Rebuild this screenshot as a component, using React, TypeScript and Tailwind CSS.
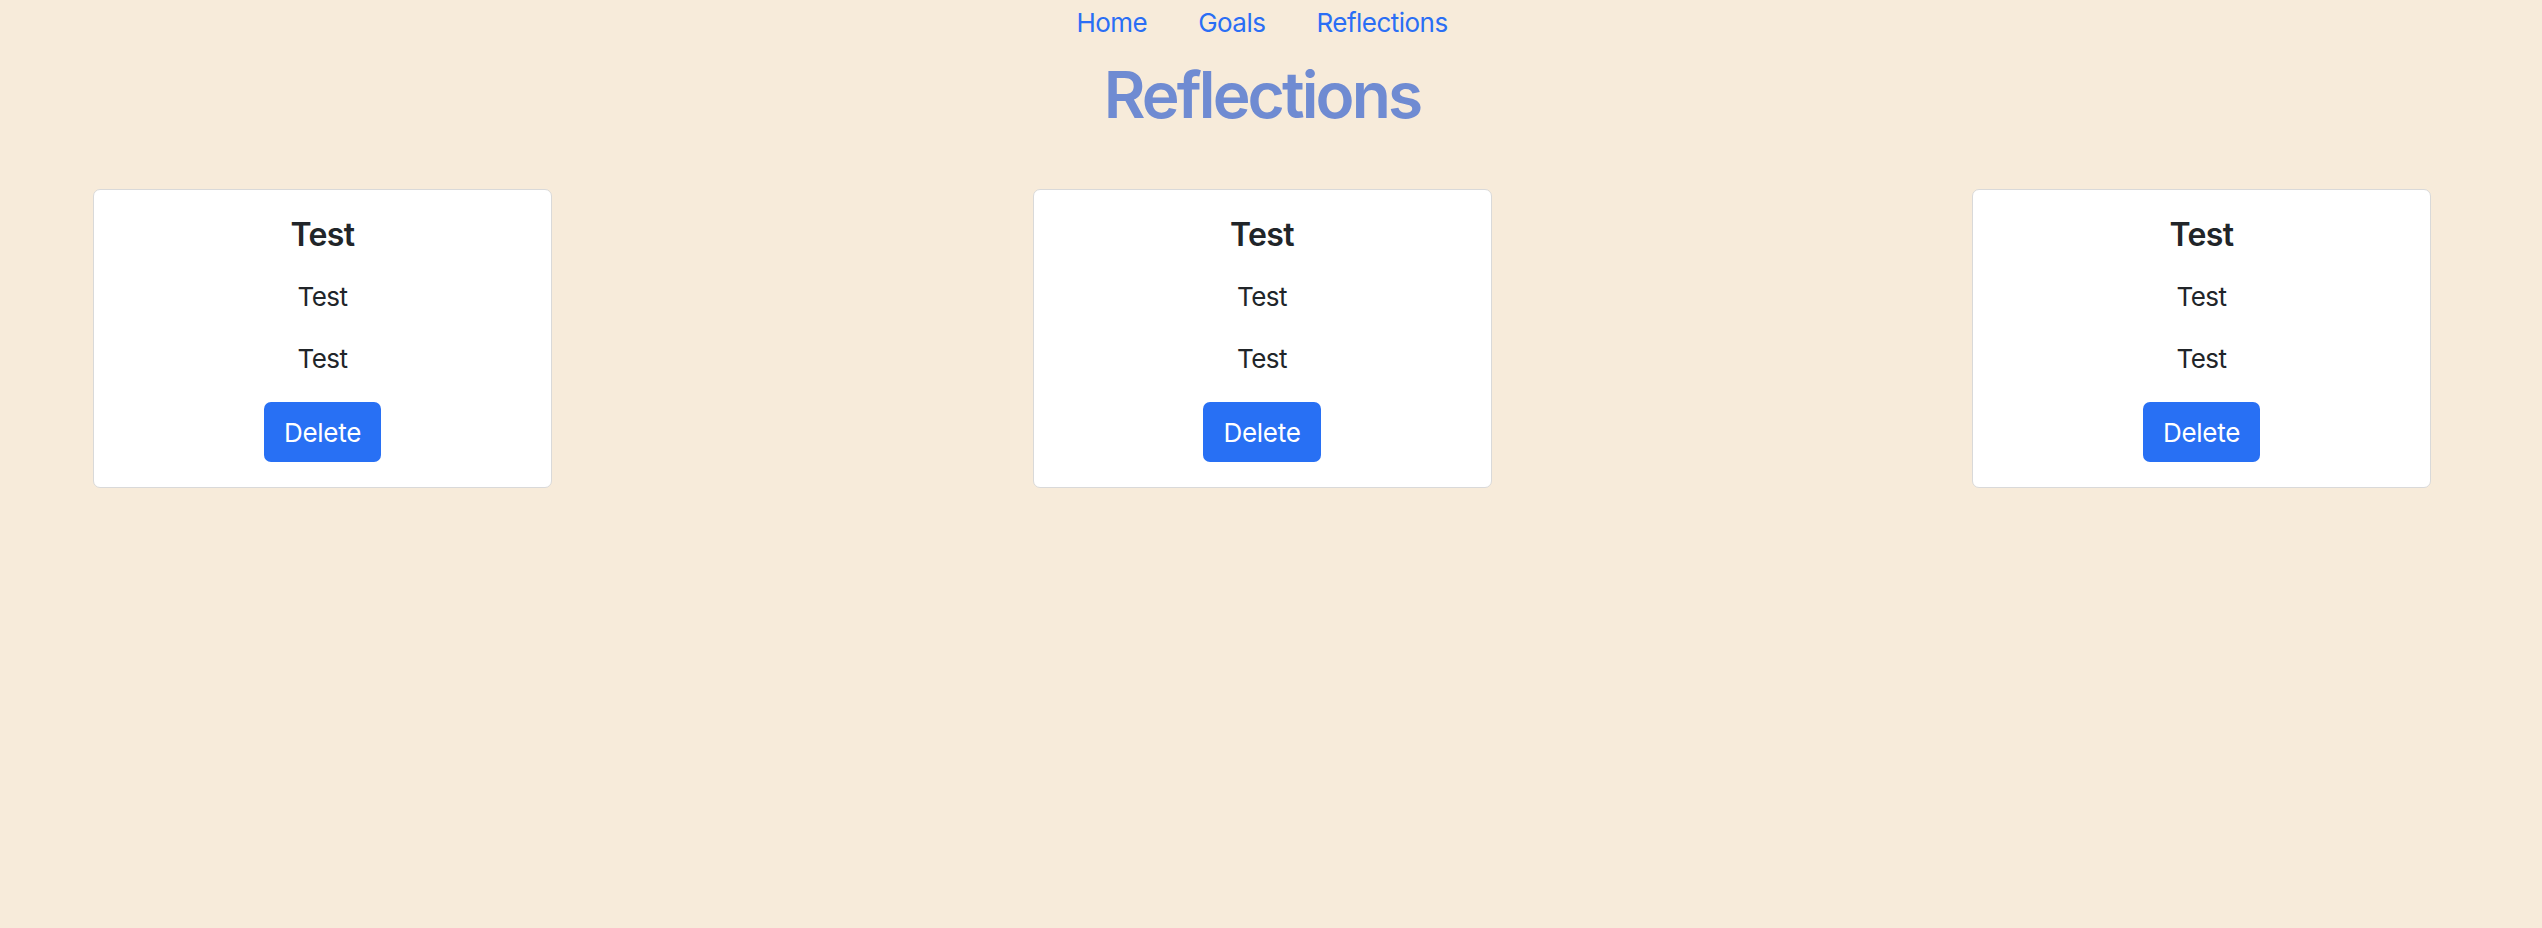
import React from "react";

const reflections = [
  { id: 1, title: "Test", body: "Test", note: "Test" },
  { id: 2, title: "Test", body: "Test", note: "Test" },
  { id: 3, title: "Test", body: "Test", note: "Test" },
];

const ReflectionCard = ({ title, body, note }: { title: string; body: string; note: string }) => {
  return (
    <div className="w-[459px] bg-white border-[1.5px] border-[#d9d9d9] rounded-[7px] text-center pt-[25px] pb-[25px] px-[25px]">
      <h5 className="text-[32px] leading-[39px] font-semibold tracking-[-0.02em] text-[#212529]">{title}</h5>
      <p className="mt-[23px] text-[26px] leading-[39px] tracking-[-0.02em] text-[#212529]">{body}</p>
      <p className="mt-[23px] text-[26px] leading-[39px] tracking-[-0.02em] text-[#212529]">{note}</p>
      <div className="mt-[24px] flex justify-center">
        <button className="h-[60px] px-[20px] bg-[#2870f4] text-white text-[26px] leading-[39px] tracking-[-0.01em] rounded-[7px]">
          Delete
        </button>
      </div>
    </div>
  );
};

export default function App() {
  return (
    <div
      className="min-h-screen w-full bg-[#f7ebda] pr-[18px]"
      style={{ fontFamily: "Inter, 'Noto Sans', sans-serif" }}
    >
      <nav className="flex justify-center gap-[51px] pt-[3px] text-[26px] leading-[39px] tracking-[-0.02em] text-[#2a6ef5]">
        <a href="#">Home</a>
        <a href="#">Goals</a>
        <a href="#">Reflections</a>
      </nav>
      <h1 className="mt-[14px] text-center text-[64px] leading-[77px] font-semibold tracking-[-0.045em] text-[#6f8bd2]">
        Reflections
      </h1>
      <div className="mt-[56px] flex justify-between px-[93px]">
        {reflections.map((r) => (
          <ReflectionCard key={r.id} title={r.title} body={r.body} note={r.note} />
        ))}
      </div>
    </div>
  );
}
